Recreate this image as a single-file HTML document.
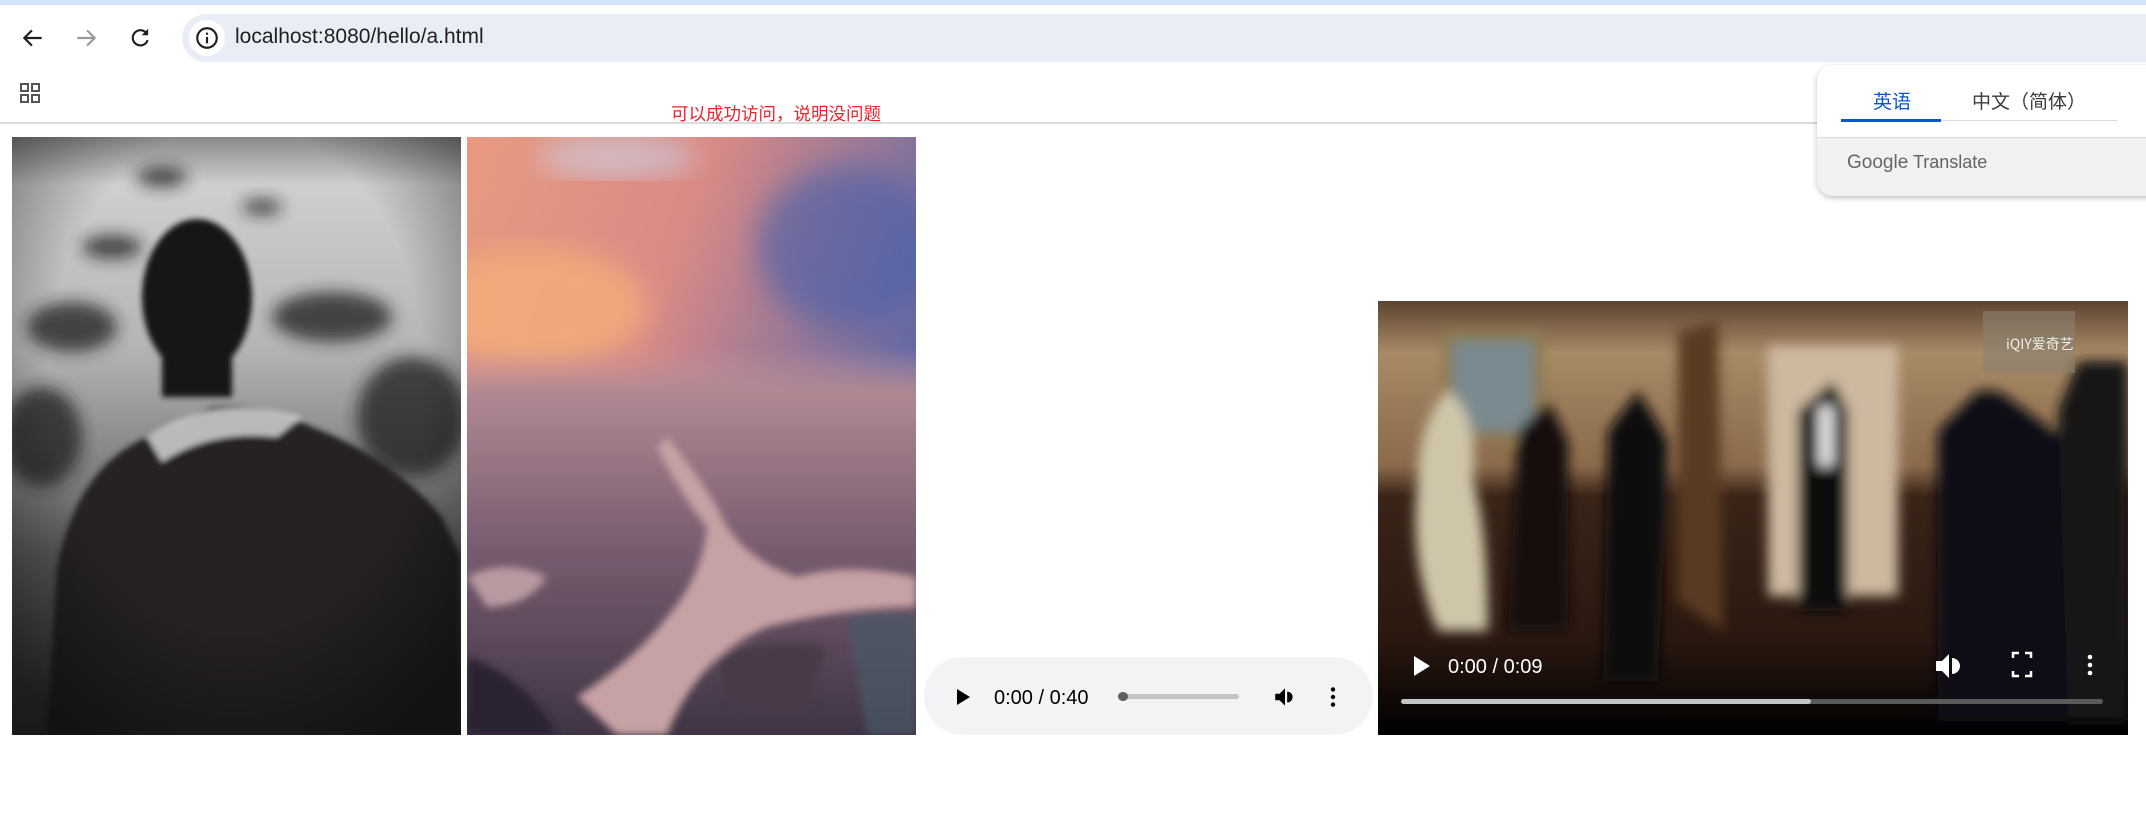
<!DOCTYPE html>
<html><head><meta charset="utf-8"><style>
*{margin:0;padding:0;box-sizing:border-box}
body{width:2146px;height:823px;background:#fff;position:relative;overflow:hidden;font-family:"Liberation Sans","Noto Sans CJK SC",sans-serif}
.abs{position:absolute}
</style></head><body>
<div class="abs" style="left:0;top:0;width:2146px;height:5px;background:#d3e3fd"></div>
<svg class="abs" style="left:20px;top:25px" width="26" height="26" viewBox="0 0 24 24"><path d="M20 12H5M11 5l-7 7 7 7" stroke="#1f1f1f" stroke-width="2" fill="none"/></svg>
<svg class="abs" style="left:73px;top:25px" width="26" height="26" viewBox="0 0 24 24"><path d="M4 12h15M13 5l7 7-7 7" stroke="#9a9a9a" stroke-width="2" fill="none"/></svg>
<svg class="abs" style="left:127px;top:25px" width="26" height="26" viewBox="0 0 24 24"><path d="M18.5 8.5A7 7 0 1 0 19 14" stroke="#1f1f1f" stroke-width="2" fill="none"/><path d="M19.5 3.5v6h-6z" fill="#1f1f1f"/></svg>
<div class="abs" style="left:182px;top:14px;width:1990px;height:48px;border-radius:24px;background:#e9eef6"></div>
<div class="abs" style="left:189px;top:20px;width:36px;height:36px;border-radius:18px;background:#fff"></div>
<svg class="abs" style="left:194px;top:25px" width="26" height="26" viewBox="0 0 24 24"><circle cx="12" cy="12" r="9" stroke="#1f1f1f" stroke-width="2" fill="none"/><path d="M12 11v6M12 7v2" stroke="#1f1f1f" stroke-width="2"/></svg>
<div class="abs" style="left:235px;top:24px;font-size:21px;color:#1f1f1f;line-height:26px">localhost:8080/hello/a.html</div>
<svg class="abs" style="left:18px;top:81px" width="24" height="24" viewBox="0 0 24 24"><g fill="none" stroke="#555" stroke-width="2"><rect x="3" y="3" width="7" height="7"/><rect x="14" y="3" width="7" height="7"/><rect x="3" y="14" width="7" height="7"/><rect x="14" y="14" width="7" height="7"/></g></svg>
<div class="abs" style="left:0;top:122px;width:2146px;height:2px;background:#dcdcdc"></div>
<div class="abs" style="left:671px;top:103px;font-size:17.5px;color:#f0202a;line-height:22px">可以成功访问，说明没问题</div>

<svg class="abs" style="left:12px;top:137px" width="449" height="598" viewBox="0 0 449 598">
<defs><linearGradient id="g1" x1="0" y1="0" x2="0" y2="1"><stop offset="0" stop-color="#8a8a8a"/><stop offset="0.08" stop-color="#cfcfcf"/><stop offset="0.35" stop-color="#b5b5b5"/><stop offset="0.7" stop-color="#5a5a5a"/><stop offset="1" stop-color="#333"/></linearGradient>
<radialGradient id="v1" cx="0.5" cy="0.4" r="0.7"><stop offset="0.6" stop-color="#000" stop-opacity="0"/><stop offset="1" stop-color="#000" stop-opacity=".5"/></radialGradient>
<filter id="b1"><feGaussianBlur stdDeviation="8"/></filter><filter id="b1s"><feGaussianBlur stdDeviation="3"/></filter></defs>
<rect width="449" height="598" fill="url(#g1)"/>
<g fill="#1a1a1a" filter="url(#b1)" opacity=".75"><ellipse cx="60" cy="190" rx="45" ry="25"/><ellipse cx="320" cy="180" rx="60" ry="25"/><ellipse cx="400" cy="280" rx="55" ry="60"/><ellipse cx="30" cy="300" rx="40" ry="50"/><ellipse cx="150" cy="40" rx="25" ry="10"/><ellipse cx="250" cy="70" rx="20" ry="8"/><ellipse cx="100" cy="110" rx="30" ry="12"/></g>
<g filter="url(#b1s)">
<path d="M35 598 L45 430 Q65 330 135 300 L200 270 Q250 265 300 290 Q380 320 430 380 L449 420 L449 598Z" fill="#262424"/>
<path d="M135 300 Q200 255 290 280 L265 300 Q200 292 150 325Z" fill="#d5d5d5" opacity=".85"/>
<ellipse cx="185" cy="160" rx="55" ry="78" fill="#121212"/>
<rect x="150" y="200" width="70" height="60" fill="#161616"/>
</g>
<rect width="449" height="598" fill="url(#v1)"/>
</svg>
<svg class="abs" style="left:467px;top:137px" width="449" height="598" viewBox="0 0 449 598">
<defs><linearGradient id="s" x1="0" y1="0" x2="1" y2="0.5"><stop offset="0" stop-color="#e99a80"/><stop offset="0.45" stop-color="#d98a86"/><stop offset="1" stop-color="#5565a8"/></linearGradient>
<linearGradient id="m" x1="0" y1="0" x2="0" y2="1"><stop offset="0" stop-color="#c4959a" stop-opacity="0"/><stop offset="0.12" stop-color="#b08892"/><stop offset="0.5" stop-color="#7a5e72"/><stop offset="1" stop-color="#3e3444"/></linearGradient>
<filter id="b2"><feGaussianBlur stdDeviation="14"/></filter><filter id="b2s"><feGaussianBlur stdDeviation="4"/></filter></defs>
<rect width="449" height="598" fill="url(#s)"/>
<ellipse cx="70" cy="170" rx="110" ry="60" fill="#f5ae7a" filter="url(#b2)" opacity=".8"/>
<ellipse cx="380" cy="110" rx="90" ry="80" fill="#4a60a8" filter="url(#b2)" opacity=".6"/>
<ellipse cx="150" cy="20" rx="80" ry="20" fill="#c8d8f0" filter="url(#b2)" opacity=".6"/>
<rect y="210" width="449" height="388" fill="url(#m)"/>
<g filter="url(#b2s)">
<path d="M190 310 Q215 360 240 390 Q235 440 200 480 Q170 520 110 560 L150 598 L200 598 Q230 520 300 490 Q380 470 449 470 L449 440 Q380 425 330 440 Q270 420 250 370 Q225 330 200 300Z" fill="#c7a2a4"/>
<path d="M0 440 Q40 420 80 440 Q60 470 20 470Z" fill="#b89aa0"/>
<path d="M0 520 Q60 540 90 598 L0 598Z" fill="#2c2430"/>
<path d="M250 520 Q300 500 360 510 L340 570 Q290 580 260 560Z" fill="#4a3a48"/>
<path d="M380 480 Q420 470 449 480 L449 598 L400 598Z" fill="#4a5a6a" opacity=".7"/>
</g>
</svg>

<div class="abs" style="left:924px;top:657px;width:449px;height:78px;border-radius:39px;background:#f1f3f4"></div>
<svg class="abs" style="left:954px;top:688px" width="18" height="18" viewBox="0 0 18 18"><path d="M3 1v16l13-8z" fill="#000"/></svg>
<div class="abs" style="left:994px;top:686px;font-size:20px;color:#000;line-height:24px">0:00 / 0:40</div>
<div class="abs" style="left:1118px;top:694px;width:121px;height:5px;border-radius:3px;background:#c4c4c4"></div>
<div class="abs" style="left:1118px;top:692px;width:10px;height:9px;border-radius:5px;background:#5f5f5f"></div>
<svg class="abs" style="left:1272px;top:684px" width="26" height="26" viewBox="0 0 24 24"><path d="M3 9v6h4l5 5V4L7 9z M14 7a5 5 0 0 1 0 10z" fill="#000"/></svg>
<svg class="abs" style="left:1320px;top:684px" width="26" height="26" viewBox="0 0 24 24"><circle cx="12" cy="5" r="2"/><circle cx="12" cy="12" r="2"/><circle cx="12" cy="19" r="2"/></svg>

<svg class="abs" style="left:1378px;top:301px" width="750" height="434" viewBox="0 0 750 434">
<defs><linearGradient id="w" x1="0" y1="0" x2="0" y2="1"><stop offset="0" stop-color="#5c4430"/><stop offset="0.12" stop-color="#a88a66"/><stop offset="0.38" stop-color="#8a6a4a"/><stop offset="0.45" stop-color="#3a2418"/><stop offset="0.78" stop-color="#2a1810"/><stop offset="1" stop-color="#000"/></linearGradient>
<filter id="b3"><feGaussianBlur stdDeviation="6"/></filter></defs>
<rect width="750" height="434" fill="url(#w)"/>
<g filter="url(#b3)">
<rect x="65" y="30" width="100" height="110" fill="#8a7a50"/><rect x="75" y="40" width="80" height="90" fill="#7a8a90"/>
<rect x="390" y="45" width="130" height="250" fill="#cdb9a0"/>
<path d="M300 30 L340 20 L345 330 L300 300Z" fill="#5a3a20"/>
<path d="M70 90 Q40 120 40 180 Q30 260 60 330 L110 330 Q110 230 95 180 Q100 110 70 90Z" fill="#cfc6aa"/>
<path d="M170 100 L140 130 L130 330 L190 330 L190 140Z" fill="#141010"/>
<path d="M260 90 L230 130 L225 380 L280 380 L290 140Z" fill="#0f0c0a"/>
<path d="M455 80 L420 110 L420 310 L470 310 L470 110Z" fill="#101010"/><rect x="440" y="105" width="16" height="60" fill="#ddd"/>
<path d="M600 90 L560 130 L560 420 L700 420 L700 150 Q650 110 620 90Z" fill="#0c0c14"/>
<path d="M700 60 L680 110 L690 420 L750 420 L750 60Z" fill="#141418"/>
</g>
<rect x="605" y="10" width="92" height="62" fill="#8a8070" opacity=".6"/>
<text x="628" y="48" font-size="14" fill="#eee" font-family="Noto Sans CJK SC,sans-serif">iQIY爱奇艺</text>
<path d="M36 355v20l16-10z" fill="#fff"/>
<text x="70" y="372" font-size="20" fill="#fff" font-family="Liberation Sans,sans-serif">0:00 / 0:09</text>
<path d="M558 360v10h6l7 7V353l-7 7z M574 357a6 6 0 0 1 0 16z" fill="#fff"/>
<path d="M635 357v-5h6 M647 352h6v5 M653 370v5h-6 M641 375h-6v-5" stroke="#fff" stroke-width="2.5" fill="none"/>
<circle cx="712" cy="356" r="2.3" fill="#fff"/><circle cx="712" cy="364" r="2.3" fill="#fff"/><circle cx="712" cy="372" r="2.3" fill="#fff"/>
<rect x="23" y="398" width="702" height="5" rx="2.5" fill="#5a5a5a"/>
<rect x="23" y="398" width="410" height="5" rx="2.5" fill="#c4c4c4"/>
</svg>

<div class="abs" style="left:1817px;top:65px;width:360px;height:131px;border-radius:16px;background:#fff;box-shadow:0 2px 6px rgba(0,0,0,.25);overflow:hidden">
<div class="abs" style="left:0;top:72px;width:360px;height:59px;background:#f1f1f1;border-top:1px solid #ddd"></div>
<div class="abs" style="left:24px;top:55px;width:277px;height:1px;background:#ddd"></div>
<div class="abs" style="left:24px;top:54px;width:100px;height:3px;background:#0b57d0"></div>
<div class="abs" style="left:56px;top:22px;font-size:19px;color:#0b57d0;font-family:'Noto Sans CJK SC',sans-serif">英语</div>
<div class="abs" style="left:155px;top:22px;font-size:19px;color:#3c3c3c;font-family:'Noto Sans CJK SC',sans-serif">中文（简体）</div>
<div class="abs" style="left:30px;top:87px;font-size:18px;color:#5f6368"><span style="font-size:19px;color:#666">Google</span> Translate</div>
</div>
</body></html>
